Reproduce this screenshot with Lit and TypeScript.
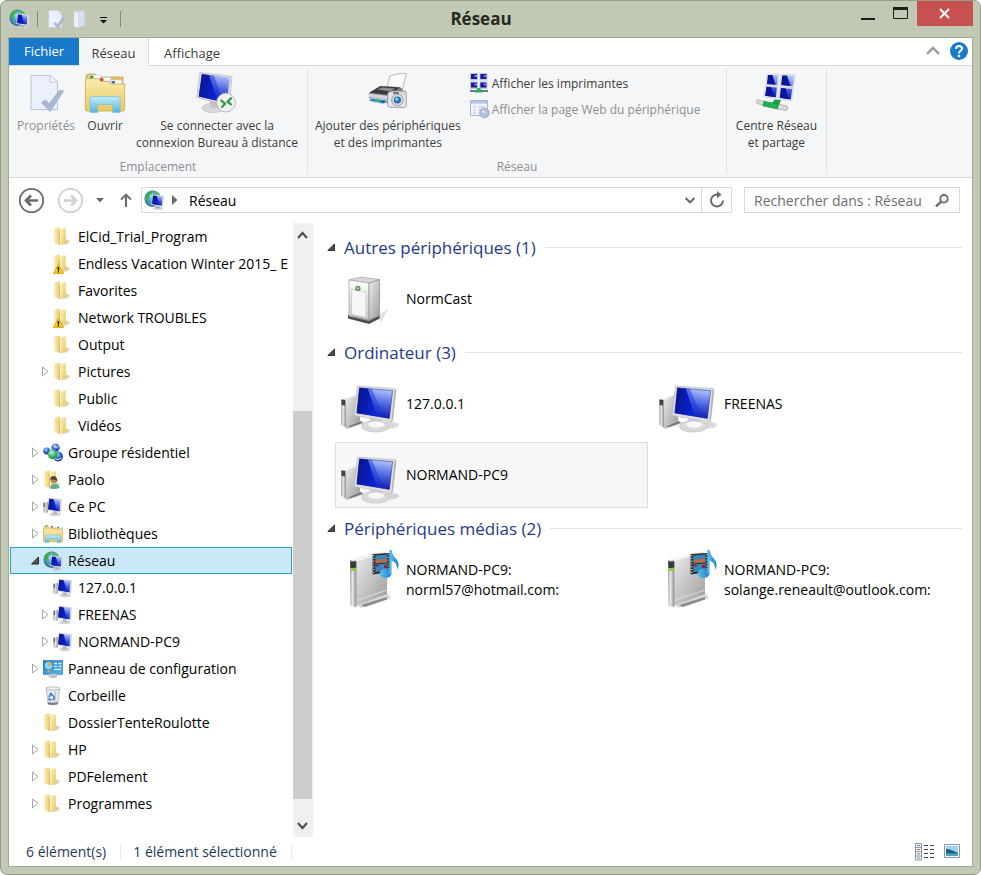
import { LitElement, html, css, svg, nothing } from "lit";
import { customElement, state } from "lit/decorators.js";
import { classMap } from "lit/directives/class-map.js";
import { styleMap } from "lit/directives/style-map.js";

type Expand = "none" | "closed" | "open";

interface TreeRow {
  label: string;
  icon: string;
  level: number;
  expand: Expand;
}

interface Device {
  lines: string[];
  icon: string;
  selected?: boolean;
}

interface Group {
  title: string;
  devices: Device[];
}

const row = (label: string, icon: string, level: number, expand: Expand = "none"): TreeRow => ({
  label,
  icon,
  level,
  expand,
});

const TREE: TreeRow[] = [
  row("ElCid_Trial_Program", "folder", 2),
  row("Endless Vacation Winter 2015_ E", "folder-warn", 2),
  row("Favorites", "folder", 2),
  row("Network TROUBLES", "folder-warn", 2),
  row("Output", "folder", 2),
  row("Pictures", "folder", 2, "closed"),
  row("Public", "folder", 2),
  row("Vidéos", "folder", 2),
  row("Groupe résidentiel", "homegroup", 1, "closed"),
  row("Paolo", "user", 1, "closed"),
  row("Ce PC", "pc", 1, "closed"),
  row("Bibliothèques", "library", 1, "closed"),
  row("Réseau", "network", 1, "open"),
  row("127.0.0.1", "pc", 2),
  row("FREENAS", "pc", 2, "closed"),
  row("NORMAND-PC9", "pc", 2, "closed"),
  row("Panneau de configuration", "panel", 1, "closed"),
  row("Corbeille", "bin", 1),
  row("DossierTenteRoulotte", "folder", 1),
  row("HP", "folder", 1, "closed"),
  row("PDFelement", "folder", 1, "closed"),
  row("Programmes", "folder", 1, "closed"),
];

const GROUPS: Group[] = [
  { title: "Autres périphériques (1)", devices: [{ lines: ["NormCast"], icon: "device-lg" }] },
  {
    title: "Ordinateur (3)",
    devices: [
      { lines: ["127.0.0.1"], icon: "pc-lg" },
      { lines: ["FREENAS"], icon: "pc-lg" },
      { lines: ["NORMAND-PC9"], icon: "pc-lg", selected: true },
    ],
  },
  {
    title: "Périphériques médias (2)",
    devices: [
      { lines: ["NORMAND-PC9:", "norml57@hotmail.com:"], icon: "media-lg" },
      { lines: ["NORMAND-PC9:", "solange.reneault@outlook.com:"], icon: "media-lg" },
    ],
  },
];

const SCROLL = { before: 164, thumb: 387, after: 15 };

const folderBody = svg`
  <path d="M13 12.5 L17.6 14 L14 17.6 L9 18Z" fill="#9a9a9a" opacity=".4"/>
  <path d="M1.4 1.4 L7 .6 V18 L1.4 16.2Z" fill="url(#g-fold-l)"/>
  <path d="M6 2.4 L12 1.2 Q13 1.2 13 2.2 V12.6 L14.6 13.2 V15.6 L7 18.6 L6 17.8Z" fill="url(#g-fold-r)"/>
  <path d="M6.4 4 V17.8" stroke="#cfae55" stroke-width=".8"/>
  <path d="M7.8 4 V17.6" stroke="#fffbe0" stroke-width=".9"/>`;

const sprite = html`
  <svg class="sprite" aria-hidden="true">
    <defs>
      <linearGradient id="g-fold-l" x1="0" x2="1" y1="0" y2="0">
        <stop offset="0" stop-color="#f9eaa6" /><stop offset="1" stop-color="#ead07a" />
      </linearGradient>
      <linearGradient id="g-fold-r" x1="0" x2="1" y1="0" y2="1">
        <stop offset="0" stop-color="#fbf0b8" /><stop offset="1" stop-color="#e6c55e" />
      </linearGradient>
      <linearGradient id="g-screen" x1="0.7" x2="0.5" y1="0" y2="1">
        <stop offset="0" stop-color="#b9c9fb" /><stop offset="0.5" stop-color="#4c66e2" /><stop offset="1" stop-color="#0712a6" />
      </linearGradient>
      <linearGradient id="g-glare" x1="0" x2="1" y1="0" y2="0.3">
        <stop offset="0" stop-color="#0a1484" /><stop offset="1" stop-color="#0a24d6" />
      </linearGradient>
      <linearGradient id="g-metal" x1="0" x2="1" y1="0" y2="0">
        <stop offset="0" stop-color="#8b8b8b" /><stop offset="0.35" stop-color="#eeeeee" /><stop offset="1" stop-color="#8d8d8d" />
      </linearGradient>
      <linearGradient id="g-case" x1="0" x2="1" y1="0" y2="1">
        <stop offset="0" stop-color="#ececec" /><stop offset="1" stop-color="#9c9c9c" />
      </linearGradient>
      <linearGradient id="g-pane" x1="0" x2="0" y1="0" y2="1">
        <stop offset="0" stop-color="#ffffff" /><stop offset="1" stop-color="#c9c9cb" />
      </linearGradient>
      <radialGradient id="g-globe" cx="0.4" cy="0.35" r="0.7">
        <stop offset="0" stop-color="#a8dcf4" /><stop offset="0.5" stop-color="#3f90cf" /><stop offset="1" stop-color="#114a8c" />
      </radialGradient>
      <radialGradient id="g-ball" cx="0.4" cy="0.3" r="0.7">
        <stop offset="0" stop-color="#b7d4fb" /><stop offset="0.5" stop-color="#3b6fd0" /><stop offset="1" stop-color="#12388f" />
      </radialGradient>
      <radialGradient id="g-green" cx="0.4" cy="0.3" r="0.7">
        <stop offset="0" stop-color="#c9f5d6" /><stop offset="0.6" stop-color="#3db868" /><stop offset="1" stop-color="#1d8a48" />
      </radialGradient>
      <linearGradient id="g-lib" x1="0" x2="0" y1="0" y2="1">
        <stop offset="0" stop-color="#f8ecae" /><stop offset="1" stop-color="#e8c95f" />
      </linearGradient>
      <linearGradient id="g-stand" x1="0" x2="0" y1="0" y2="1">
        <stop offset="0" stop-color="#c5ecf8" /><stop offset="1" stop-color="#58b4dc" />
      </linearGradient>
      <linearGradient id="g-note" x1="0" x2="1" y1="0" y2="0">
        <stop offset="0" stop-color="#5cc0f0" /><stop offset="1" stop-color="#1e82cc" />
      </linearGradient>
      <linearGradient id="g-panel" x1="0" x2="1" y1="0" y2="1">
        <stop offset="0" stop-color="#1f84c6" /><stop offset="1" stop-color="#5eb7e8" />
      </linearGradient>
    </defs>

    <symbol id="folder" viewBox="0 0 20 20">${folderBody}</symbol>
    <symbol id="folder-warn" viewBox="0 0 20 20">
      ${folderBody}
      <path d="M5.4 10.5 L10.6 19.4 H.2Z" fill="#ffcb1f" stroke="#d99a00" stroke-width=".8" stroke-linejoin="round" />
      <path d="M5.4 13 V16.4 M5.4 17.3 V18.6" stroke="#111" stroke-width="1.5" />
    </symbol>
    <symbol id="user" viewBox="0 0 20 20">
      ${folderBody}
      <path d="M7 18.4 Q7.6 14 11.6 14 Q16 14 16.8 17.8 Q12 20 7 18.4Z" fill="#5fae94" />
      <circle cx="10.8" cy="10" r="3.2" fill="#b98a5e" />
      <path d="M7.2 9.8 Q7.2 6 11 6 Q14.6 6.4 14.2 12 Q12.8 8.4 7.2 9.8Z" fill="#5c4830" />
    </symbol>
    <symbol id="homegroup" viewBox="0 0 20 20">
      <circle cx="12.5" cy="4.6" r="4.2" fill="url(#g-ball)" />
      <circle cx="3.6" cy="8" r="3.4" fill="url(#g-ball)" />
      <circle cx="15" cy="13.4" r="5" fill="url(#g-ball)" />
      <circle cx="9.6" cy="11.4" r="4.8" fill="url(#g-green)" />
      <path d="M11 3.6 Q13.6 5.4 16 3.4 M11.6 15.6 Q15 18 18.6 15" fill="none" stroke="#cfe2ff" stroke-width="1" />
    </symbol>
    <symbol id="pc" viewBox="0 0 20 20">
      <path d="M.6 5.6 L5 4.8 V15.2 L2.6 16.2 L.6 15Z" fill="url(#g-metal)" />
      <path d="M.6 6 L2 5.8 V10 L.6 10Z" fill="#666" />
      <ellipse cx="12" cy="17.4" rx="5.8" ry="1.9" fill="#d4d4d8" />
      <path d="M9.6 13.6 L14 14 V17.6 H9.6Z" fill="#b8b8bc" />
      <path d="M5.6 .8 L19 2.2 L18.2 15.8 L4.2 13Z" fill="#d3d6de" />
      <path d="M6.3 1.8 L17.2 2.8 L16.6 14.2 L5.2 12.2Z" fill="url(#g-screen)" />
      <path d="M6.3 1.8 L10.6 2.2 L14 13.7 L5.2 12.2Z" fill="url(#g-glare)" />
    </symbol>
    <symbol id="network" viewBox="0 0 20 20">
      <circle cx="8.6" cy="8.6" r="8.2" fill="url(#g-globe)" />
      <path d="M1.6 4.8 Q5 .6 9 .6 Q8 3.6 5.4 5.4 Q6 8 3.6 10.6 Q.6 9 1.6 4.8Z" fill="#3fae49" />
      <path d="M11 1 Q15.4 2.4 16 6 L12 6 Q10 3.6 11 1Z" fill="#58bb55" />
      <path d="M3.4 11.6 Q6 11 7 14 L7 15.6 Q4 14.6 3.4 11.6Z" fill="#4bb45a" />
      <ellipse cx="14" cy="18.2" rx="5" ry="1.5" fill="#cfcfd4" />
      <path d="M12 15.6 H15.6 V18.2 H12Z" fill="#a9a9ad" />
      <path d="M8.2 4.4 L20 5.8 L19.2 17.2 L7.2 15Z" fill="#d8dae2" />
      <path d="M9 5.4 L18.4 6.6 L17.8 15.6 L8.2 14Z" fill="url(#g-screen)" />
      <path d="M9 5.4 L12.8 5.9 L15.6 15.2 L8.2 14Z" fill="url(#g-glare)" />
    </symbol>
    <symbol id="library" viewBox="0 0 20 20">
      <path d="M.6 1.4 H6 L7 2.4 H12 L13 3.4 H19.4 V17.5 H.6Z" fill="#e7cd75" />
      <path d="M2 1 H7 V3.6 H2Z M7 1.8 H12 V4 H7Z M13 2.6 H18 V5 H13Z" fill="#f7f5ea" />
      <path d="M2.6 1 H4.4 V3 H2.6Z" fill="#5aa65a" /><path d="M8 2 H10 V3.8 H8Z" fill="#cf5b5b" /><path d="M14 2.8 H16 V4.6 H14Z" fill="#5a86c8" />
      <path d="M.6 4 H8 L9 5 H19.4 V17.6 H.6Z" fill="url(#g-lib)" stroke="#c9a94a" stroke-width=".6" />
      <path d="M2.4 18.6 V12.6 Q2.4 11 4 11 H16 Q17.6 11 17.6 12.6 V18.6 H14.2 V15 H5.8 V18.6Z" fill="url(#g-stand)" stroke="#6fb9da" stroke-width=".6" />
    </symbol>
    <symbol id="panel" viewBox="0 0 20 20">
      <path d="M0 1.4 H20 V15.4 H0Z" fill="url(#g-panel)" stroke="#2475ad" stroke-width=".6" />
      <ellipse cx="10" cy="16.8" rx="4.6" ry="2.4" fill="#c2c6ca" />
      <circle cx="5.6" cy="6.4" r="3.2" fill="#8fd0f0" stroke="#e2f4fd" stroke-width=".6" />
      <path d="M5.6 6.4 V3.2 A3.2 3.2 0 0 1 8.8 6.4Z" fill="#f39a2b" />
      <path d="M11 4.5 H14 M15.4 4.5 H18.4 M11 7.4 H14 M15.4 7.4 H18.4 M11 10.4 H18" stroke="#d8f0fc" stroke-width="1.3" />
      <path d="M4.6 12 H7" stroke="#f6a23c" stroke-width="1.6" />
    </symbol>
    <symbol id="bin" viewBox="0 0 20 20">
      <path d="M3 2.2 H16.8 L14.8 18 Q9.8 19.8 5 18Z" fill="#e2e8ee" stroke="#a9b4be" stroke-width=".7" />
      <path d="M4.8 16 Q9.8 17.6 15 16 L14.7 18.2 Q9.8 19.8 5 18.2Z" fill="#77818b" />
      <ellipse cx="9.9" cy="2.4" rx="6.9" ry="1.5" fill="#f4f7fa" stroke="#9ca9b4" stroke-width=".7" />
      <path d="M6 11 L7.8 7.6 L9.8 9.6 M10.4 9.4 L11.6 12.4 L9.6 13.8 M8.4 13.8 H6.4 L5.8 12" fill="none" stroke="#3b6fd4" stroke-width="1.5" />
      <path d="M12.6 5 L12 15.4" stroke="#b8c2cc" stroke-width="1.2" />
    </symbol>

    <symbol id="pc-lg" viewBox="0 0 60 60">
      <ellipse cx="48" cy="51" rx="10" ry="3.4" fill="#888" opacity=".3" />
      <path d="M2 52 L18 46 L24 49 L6 55Z" fill="#777" opacity=".45" />
      <path d="M5 25 L19 20 V47 L5 52.6Z" fill="url(#g-case)" />
      <path d="M.4 26.4 Q.4 24.8 2 25 L5 25.6 V52.8 L2 52 Q.4 51.4 .4 50Z" fill="url(#g-metal)" />
      <path d="M.4 26.4 Q.4 24.8 2 25 L4 25.4 V31.6 L.6 31Z" fill="#444" />
      <path d="M.4 25.4 L15 20 L19 20 L5 25.8Z" fill="#f2f2f2" />
      <path d="M7 52.4 L20 47 L21 49 L10 53Z" fill="#777" />
      <path d="M29 43 L41 46 L42 53 H28Z" fill="#d0d0d0" />
      <ellipse cx="34.5" cy="52.4" rx="14" ry="5.6" fill="#dadadc" stroke="#c2c2c4" stroke-width=".8" />
      <ellipse cx="35" cy="50.6" rx="8" ry="3.2" fill="#f8f8f8" />
      <path d="M16.4 12.6 Q16.6 11.8 17.4 12 L54 14.6 Q55.2 14.8 55 16 L51.6 46.6 Q51.4 47.8 50 47.6 L14 41.6 Q13.4 41.4 13.4 40.6Z" fill="#dfe1e4" stroke="#babcc0" stroke-width=".7" />
      <path d="M53.6 15.4 L55 16 L51.6 46.8 L50.4 47.2Z" fill="#aeb0b4" />
      <path d="M18.4 13.8 L51.6 16.6 L48.4 44.4 L15.8 39Z" fill="url(#g-screen)" stroke="#1a2378" stroke-width=".5" />
      <path d="M18.4 13.8 L27 14.5 L36 42.3 L15.8 39Z" fill="url(#g-glare)" />
      <path d="M27 14.5 L31 14.9 L43 43.5 L36 42.3Z" fill="#1430dc" opacity=".45" />
    </symbol>

    <symbol id="device-lg" viewBox="0 0 60 60">
      <path d="M36 48 L48 39 L40 53Z" fill="#888" opacity=".25" />
      <path d="M7 46 L28 51 L38.6 46 L38.6 49.6 L28 55 L7 49.6Z" fill="#4d4d50" />
      <path d="M8 11 L20 8 L38.6 10.6 L28 14Z" fill="#d9d9db" stroke="#a5a5a7" stroke-width=".7" />
      <path d="M8 11 L28 14 V50.6 L8 46.4Z" fill="url(#g-pane)" stroke="#a6a6a8" stroke-width=".8" />
      <path d="M28 14 L38.6 10.6 V45.6 L28 50.6Z" fill="url(#g-case)" stroke="#939395" stroke-width=".8" />
      <path d="M10.6 20.4 L25 23 V48.4 L10.6 45.4Z" fill="#f7f7f8" stroke="#c2c2c4" stroke-width=".7" />
      <circle cx="17" cy="19.4" r="2.6" fill="#58934c" /><circle cx="17" cy="19.4" r="1.1" fill="#cfe6c9" />
      <path d="M8 47 L28 51.6 L38.6 46.4" fill="none" stroke="#a9a9ab" stroke-width=".8" />
    </symbol>

    <symbol id="media-lg" viewBox="0 0 60 60">
      <path d="M14 54 L46 43 L50 48 L20 58Z" fill="#777" opacity=".3" />
      <path d="M20 55 L46 47 V49.6 L24 57Z" fill="#8b8b8d" />
      <path d="M15 11.4 L41 2.6 Q46 1.4 46 6 V44 L15 55.6Z" fill="url(#g-case)" />
      <path d="M15 50.6 L46 40 " stroke="#e4e4e4" stroke-width=".8" />
      <path d="M9 10 L37 1.4 Q42 .8 43 2.6 L15 11.8Z" fill="#f3f3f3" />
      <path d="M9 11.4 Q9 9.4 11 9.8 L15.4 10.8 V57 L11 56.6 Q9.6 56.2 9.6 54.6Z" fill="url(#g-metal)" />
      <path d="M9.2 11.2 L15.2 11.6 V18 H9.4Z" fill="#3a3a3c" /><path d="M10 18.4 L15 17.6 V20.4 L10 21Z" fill="#7bd321" />
      <path d="M31.6 4 L49 3 V22 L31.6 24.4Z" fill="#2b2b2f" />
      <path d="M34.4 5.4 L46.6 4.6 V12.4 L34.4 13.4Z" fill="#3b86b8" /><path d="M34.4 14.6 L46.6 13.6 V20.6 L34.4 22.2Z" fill="#3b86b8" />
      <path d="M35 12.8 V10 L38 9 L39.6 11.4 L44 7.4 L46.4 12.2Z" fill="#d5622d" />
      <path d="M35 14.8 H37.6 V16.6 H35Z M43 15 H46 V18 H43Z" fill="#8e2525" />
      <path d="M32.8 5 V24 M48 4 V22" stroke="#e6e6e6" stroke-width="1.1" stroke-dasharray="1.2 1.6" />
      <ellipse cx="44.6" cy="23.4" rx="5.8" ry="4.6" fill="url(#g-note)" />
      <path d="M48.4 24 V0 H50.6 Q51.2 5 55 8.6 Q59.8 14.4 56 20 Q56.6 12.4 50.6 10.8 V23.6Z" fill="url(#g-note)" />
    </symbol>

    <symbol id="props" viewBox="0 0 40 40">
      <path d="M5 2.5 H24 L31.5 9 V36.5 H5Z" fill="#ebf0fa" stroke="#b9c5dd" />
      <path d="M24 2.5 V9 H31.5Z" fill="#fbfcff" stroke="#b9c5dd" />
      <path d="M15.4 29.6 L19.6 27 L23 31 L33.6 17 L37.6 18.2 L24 38.6Z" fill="#aab8d2" stroke="#9fadc9" stroke-width=".8" />
    </symbol>
    <symbol id="open" viewBox="0 0 44 44">
      <path d="M3 5 Q3 3 5 3 H12 L14 6 H40 V16 H3Z" fill="#e2c265" stroke="#c5a242" stroke-width=".7" />
      <path d="M6 4 H18 V9 H6Z M16 6.4 H28 V11 H16Z M26 9 H39 V14 H26Z" fill="#fff" stroke="#c9c4ae" stroke-width=".6" />
      <path d="M7 4.6 H10.4 V8 H7Z" fill="#3f9e4a" /><path d="M17 7.2 H20.4 V10 H17Z" fill="#cf3a3a" /><path d="M28.6 10 H32 V12.6 H28.6Z" fill="#3d78c2" />
      <path d="M2.4 9 Q2.4 7.6 4 7.6 H15 L18 10.4 H25 L28 13 H41.6 V38 Q41.6 40 39.6 40 H4 Q2.4 40 2.4 38Z" fill="url(#g-lib)" stroke="#cda946" stroke-width=".8" />
      <path d="M7 41.4 V28.4 Q7 25.6 9.8 25.6 H34.4 Q37.2 25.6 37.2 28.4 V41.4 H29.8 V33.6 H14.6 V41.4Z" fill="url(#g-stand)" stroke="#7cc0dd" stroke-width=".8" />
    </symbol>
    <symbol id="rdp" viewBox="0 0 44 44">
      <ellipse cx="18" cy="37" rx="11" ry="4.6" fill="#d9d9dc" stroke="#bdbdc0" stroke-width=".7" />
      <path d="M15 30 H25 V37 H15Z" fill="#c3c3c6" />
      <path d="M5 1.4 L37 5.4 L34 34.6 L1.8 26.8Z" fill="#d9dbe0" stroke="#b7b9be" stroke-width=".7" />
      <path d="M6.8 3 L34.6 6.8 L31.8 32 L3.8 25.4Z" fill="url(#g-screen)" />
      <path d="M6.8 3 L14.4 4 L22.4 29.8 L3.8 25.4Z" fill="url(#g-glare)" />
      <path d="M14.4 4 L19 4.6 L28 31 L22.4 29.8Z" fill="#1430dc" opacity=".5" />
      <circle cx="31" cy="31.6" r="9.4" fill="#f1f1f1" stroke="#bcbcbc" />
      <path d="M25.6 29 L30 32.6 L26.6 36.6 M36.6 26.6 L32.6 30.6 L36.6 34" fill="none" stroke="#2b9a3d" stroke-width="2.2" />
    </symbol>
    <symbol id="printer" viewBox="0 0 44 44">
      <path d="M24 5 Q30 2.6 40.6 2.4 Q38.4 9 36.6 18 L21 16Z" fill="#fbfbfb" stroke="#a8a8a8" stroke-width=".8" />
      <path d="M3 22 L14 15 L34 16 L37 19 V28 L24 33 L3 27Z" fill="#77787c" />
      <path d="M3.4 21.6 L14.4 15.2 L33.6 16.4 L24.6 24Z" fill="#3a3b40" />
      <path d="M11 18.6 L16 16.4 L29 17.4 L25 20.6Z" fill="#8b8c91" />
      <path d="M2.4 22.6 L24 25 V29 L2.4 26Z" fill="#d4d5d8" />
      <path d="M5 27 L22 29.6 L18 33 L3 30Z" fill="#2f84cf" stroke="#e5e5e5" stroke-width=".8" />
      <path d="M7 29.2 L13 29 L14 31.2 L9 30.8Z" fill="#39b45d" /><path d="M15 29.6 L19.6 30.2 L17 31.8Z" fill="#0d4f96" />
      <path d="M22 21.4 L27 20 H39 Q40.4 20.2 40.4 22.4 V34.6 Q40 36.4 38 36.4 H24 Q21.6 36 21.6 33.6Z" fill="#e4e6ea" stroke="#8e9096" stroke-width=".8" />
      <path d="M27 20.8 H33 V23.2 H27Z" fill="#7b7d84" /><path d="M35 21.4 H38.6 V23.4 H35Z" fill="#fff" stroke="#888" stroke-width=".5" />
      <circle cx="31.4" cy="29" r="5.8" fill="#d6dae0" stroke="#8b8e95" stroke-width=".8" /><circle cx="31.4" cy="29" r="3.6" fill="#2a6cab" /><circle cx="30.8" cy="28.2" r="1.6" fill="#7fd4ff" />
    </symbol>
    <symbol id="center" viewBox="0 0 44 44">
      <path d="M13 3 L25 3.2 L24 15 L11.8 14Z M27 3.4 L41.4 3.8 L39.6 16.4 L26 15.2Z M11.4 14.4 L23.8 15.4 L23 27.6 L10 26Z M25.8 15.8 L39.4 17 L37.8 30 L24.6 28Z" fill="#e6e8f2" stroke="#c7cadb" stroke-width=".6" />
      <path d="M14 4 L23.8 4.2 L23 13.8 L13 13Z M28.2 4.4 L40 4.8 L38.6 15.2 L27.2 14Z M12.6 15.8 L22.8 16.6 L22 26.2 L11.2 24.8Z M27 17 L38.2 18 L36.8 28.6 L25.8 26.8Z" fill="url(#g-screen)" />
      <path d="M14 4 L18.4 4.1 L21.6 13.7 L13 13Z M28.2 4.4 L33 4.6 L36.6 15 L27.2 14Z M12.6 15.8 L17 16.1 L20.6 26 L11.2 24.8Z M27 17 L31.6 17.4 L34.6 28.3 L25.8 26.8Z" fill="#0a159e" />
      <path d="M20.6 28.4 L27 29 L25 34 L18 32.6Z" fill="#19a04a" />
      <path d="M3.4 28.6 Q1.6 30.6 3 32.6 L11 34.6 L12 30.6Z" fill="#dadbd8" stroke="#9fa19d" stroke-width=".7" />
      <path d="M24 33 L33 35 Q34.6 37 32.6 39.4 L23 37.8Z" fill="#dadbd8" stroke="#9fa19d" stroke-width=".7" />
      <path d="M10 30.4 L24.6 33 L23.4 38 L9 34.8Z" fill="#1fb152" stroke="#108a3b" stroke-width=".7" />
    </symbol>
    <symbol id="printers" viewBox="0 0 20 20">
      <path d="M0 0 H8 V7.6 H0Z M9.4 0 H17.4 V7.6 H9.4Z M0 8.4 H8 V16 H0Z M9.4 8.4 H17.4 V16 H9.4Z" fill="#c3c7d6" />
      <path d="M1 1 H7 V6 H1Z M10.4 1 H16.4 V6 H10.4Z M1 9.4 H7 V14.4 H1Z M10.4 9.4 H16.4 V14.4 H10.4Z" fill="#1717a0" />
      <path d="M4.4 2 H7 V4 H4.4Z M13.8 2 H16.4 V4 H13.8Z M4.4 10.4 H7 V12.4 H4.4Z M13.8 10.4 H16.4 V12.4 H13.8Z" fill="#7b8de0" />
      <path d="M0 18 H18" stroke="#77797a" stroke-width="2" /><path d="M7.6 15 H10 L13 19.6 H4.6Z" fill="#22b560" />
    </symbol>
    <symbol id="webpage" viewBox="0 0 20 20">
      <path d="M.5 1.5 H17.5 V16.5 H.5Z" fill="#f1f4fb" stroke="#a9b7d3" />
      <path d="M1 2 H17 V4.6 H1Z" fill="#b6c6e2" />
      <path d="M3 8 H6 M8 8 H15 M3 11 H6 M8 11 H12 M3 14 H6" stroke="#b9c5dc" />
      <circle cx="14.4" cy="14" r="4.8" fill="#b4c2dc" stroke="#8fa1c4" stroke-width=".8" /><path d="M12 11.6 Q15 11 15.6 13 Q13 16 12 11.6Z" fill="#dde5f3" />
    </symbol>
    <symbol id="qat-open" viewBox="0 0 20 20">
      <path d="M5 2 L10 1 H15.6 V13 L17.8 14 V17 L10 19 L5 17.6Z" fill="#c3cfe2" />
      <path d="M5 2 L9.4 3.6 V19 L5 17.4Z" fill="#e9eef7" /><path d="M9.4 3.6 L15.6 2 V15 L9.4 19Z" fill="#d6dfed" />
    </symbol>
  </svg>
`;

const icon = (id: string, cls: string) =>
  html`<svg class=${cls} aria-hidden="true"><use href=${`#${id}`}></use></svg>`;

@customElement("app-root")
export class AppRoot extends LitElement {
  @state() private current = "Réseau";

  static styles = css`
    :host {
      display: block;
      font-family: "Open Sans", "Noto Sans", sans-serif;
      font-size: 14px;
      color: #000;
    }
    * {
      box-sizing: border-box;
    }
    button,
    input {
      font: inherit;
      color: inherit;
      background: none;
      border: 0;
      padding: 0;
      margin: 0;
    }
    svg {
      display: block;
      flex: none;
      overflow: visible;
    }
    .sprite {
      position: absolute;
      width: 0;
      height: 0;
    }
    .i20 { width: 20px; height: 20px; }
    .i40 { width: 40px; height: 40px; }
    .i44 { width: 44px; height: 44px; }
    .i60 { width: 60px; height: 60px; }

    .window {
      display: flex;
      flex-direction: column;
      min-height: 100vh;
      background: #c1c9b5;
      border: 1px solid #949c88;
      border-radius: 7px;
      padding: 0 7px 7px;
    }
    .titlebar {
      display: flex;
      height: 36px;
      flex: none;
    }
    .qat {
      display: flex;
      align-items: center;
      gap: 8px;
      padding-left: 1px;
    }
    .qat button { display: flex; }
    .qat-sep {
      width: 1px;
      height: 16px;
      background: #838b79;
    }
    .qat-tools {
      display: flex;
      gap: 3px;
      align-items: center;
    }
    h1 {
      flex: 1;
      margin: 0;
      text-align: center;
      font-size: 17px;
      line-height: 36px;
      font-weight: 700;
      color: #262a20;
    }
    .winbtns {
      display: flex;
      align-items: flex-start;
      padding-left: 10px;
    }
    .winbtns button {
      width: 33px;
      height: 25px;
      display: flex;
      align-items: center;
      justify-content: center;
    }
    .winbtns .close {
      width: 56px;
      background: #c75050;
    }

    .client {
      flex: 1;
      display: flex;
      flex-direction: column;
      background: #fff;
      border: 1px solid #a3ab98;
    }
    .tabs {
      display: flex;
      height: 28px;
      border-bottom: 1px solid #dadbdc;
      font-size: 13px;
      color: #3c3c3c;
    }
    .tabs .file {
      background: #1979ca;
      color: #fff;
      width: 70px;
      padding-bottom: 2px;
    }
    .tabs .active {
      height: 28px;
      width: 70px;
      padding-top: 2px;
      background: #f5f6f7;
      border-right: 1px solid #dadbdc;
    }
    .tabs .plain { padding: 2px 15px 0; }
    .tabs .right {
      margin-left: auto;
      display: flex;
      align-items: center;
      gap: 10px;
      padding: 0 4px 2px 0;
    }

    .ribbon {
      display: flex;
      height: 112px;
      padding: 3px 0;
      background: #f5f6f7;
      border-bottom: 1px solid #dadbdc;
      font-size: 12px;
      line-height: 17px;
      color: #3c3c3c;
    }
    .group {
      display: flex;
      flex-direction: column;
      border-right: 1px solid #e0e1e3;
    }
    .tools {
      flex: 1;
      display: flex;
      align-items: flex-start;
    }
    .group-name {
      text-align: center;
      color: #8e8f91;
      height: 16px;
    }
    .big {
      display: flex;
      flex-direction: column;
      align-items: center;
      gap: 2px;
    }
    .big .slot {
      height: 44px;
      display: flex;
      align-items: center;
    }
    .g1 { width: 299px; }
    .g1 .tools { gap: 8px; padding: 2px 8px 0; }
    .g2 { width: 419px; }
    .g2 .tools { padding: 2px 6px 0 7px; gap: 9px; }
    .g3 { width: 100px; }
    .g3 .tools { justify-content: center; padding-top: 2px; }
    .g1 .big:last-child { flex: 1; }
    .dim { color: #8e8f91; }
    .small-list {
      display: flex;
      flex-direction: column;
      gap: 6px;
      padding-top: 2px;
    }
    .small {
      display: flex;
      align-items: center;
      gap: 2px;
      height: 20px;
      white-space: nowrap;
    }

    .navbar {
      display: flex;
      align-items: center;
      height: 45px;
      padding: 0 12px 1px 9px;
    }
    .navbar button { display: flex; align-items: center; justify-content: center; flex: none; }
    .back { margin-right: 12px; }
    .hist { width: 31px; height: 26px; }
    .up { width: 22px; height: 26px; margin-right: 4px; }
    .address {
      flex: 1;
      display: flex;
      align-items: center;
      height: 26px;
      border: 1px solid #d9d9d9;
    }
    .address .where { gap: 8px; padding-left: 2px; }
    .address .where span { padding-left: 3px; }
    .address .drop { width: 22px; height: 24px; margin-left: auto; }
    .address .refresh { width: 30px; height: 24px; border-left: 1px solid #d9d9d9; }
    .search {
      display: flex;
      align-items: center;
      width: 216px;
      height: 26px;
      margin-left: 12px;
      border: 1px solid #d9d9d9;
      padding: 0 10px 0 9px;
    }
    .search input {
      flex: 1;
      min-width: 0;
      outline: 0;
    }
    .search input::placeholder { color: #6d6d6d; opacity: 1; }

    .body {
      flex: 1;
      display: flex;
    }
    .tree {
      flex: none;
      width: 284px;
      margin: 0;
      padding: 0 0 0 1px;
      list-style: none;
    }
    .tree button {
      display: flex;
      align-items: center;
      width: 282px;
      height: 27px;
      border: 1px solid transparent;
      padding-left: 18px;
      white-space: nowrap;
      overflow: hidden;
      text-align: left;
    }
    .tree .deep { padding-left: 28px; }
    .tree .on {
      background: #cbe8f6;
      border-color: #26a0da;
    }
    .twist {
      width: 14px;
      flex: none;
      display: flex;
      justify-content: center;
    }
    .tree .i20 { margin-right: 5px; }

    .scroll {
      flex: none;
      width: 20px;
      display: flex;
      flex-direction: column;
      padding-right: 1px;
      background: #f0f0f0;
    }
    .scroll button {
      height: 23px;
      display: flex;
      align-items: center;
      justify-content: center;
    }
    .thumb { background: #cdcdcd; }

    .content {
      flex: 1;
      min-width: 0;
      padding: 7px 0 0 14px;
    }
    .content section { margin-bottom: 3px; }
    h2 {
      display: flex;
      align-items: center;
      height: 34px;
      margin: 0 10px 2px 0;
      font-size: 17px;
      font-weight: 400;
      color: #1f3a8c;
      gap: 9px;
      white-space: nowrap;
    }
    h2 i {
      flex: 1;
      height: 1px;
      background: #e2e2e2;
    }
    .grid {
      display: grid;
      grid-template-columns: repeat(auto-fill, 313px);
      gap: 5px;
      padding-left: 8px;
    }
    .cell {
      display: flex;
      align-items: center;
      gap: 5px;
      height: 66px;
      border: 1px solid transparent;
      padding-left: 5px;
      text-align: left;
      line-height: 20px;
      white-space: nowrap;
    }
    .cell.sel {
      background: #f7f7f7;
      border-color: #dedede;
    }
    .cell span { display: block; }

    .status {
      display: flex;
      align-items: center;
      height: 29px;
      padding: 0 11px 0 17px;
      color: #1e395b;
    }
    .status span {
      border-right: 1px solid #e6ebf2;
      padding-right: 14px;
      margin-right: 12px;
      line-height: 16px;
    }
    .views {
      margin-left: auto;
      display: flex;
      gap: 9px;
    }
  `;

  private titlebar() {
    return html`<header class="titlebar">
      <div class="qat">
        ${icon("network", "i20")}
        <div class="qat-sep"></div>
        <div class="qat-tools">
          <button aria-label="Propriétés">${icon("props", "i20")}</button>
          <button aria-label="Ouvrir">${icon("qat-open", "i20")}</button>
          <button aria-label="Personnaliser">
            <svg width="20" height="20"><path d="M8 8.5 H15" stroke="#111" /><path d="M8 11 H15 L11.5 14.5Z" fill="#111" /></svg>
          </button>
        </div>
        <div class="qat-sep"></div>
      </div>
      <h1>Réseau</h1>
      <div class="winbtns">
        <button aria-label="Réduire"><svg width="14" height="14"><path d="M0 12 H14" stroke="#1c1f18" stroke-width="2" /></svg></button>
        <button aria-label="Agrandir"><svg width="15" height="13"><path d="M.5 1 V11.5 H14.5 V1" fill="none" stroke="#1c1f18" /><path d="M0 1.5 H15" stroke="#1c1f18" stroke-width="3" /></svg></button>
        <button class="close" aria-label="Fermer"><svg width="12" height="9"><path d="M1 0 L10 9 M10 0 L1 9" stroke="#fff" stroke-width="2" /></svg></button>
      </div>
    </header>`;
  }

  private tabs() {
    return html`<nav class="tabs">
      <button class="file">Fichier</button>
      <button class="active">Réseau</button>
      <button class="plain">Affichage</button>
      <div class="right">
        <button aria-label="Réduire le ruban"><svg width="14" height="10"><path d="M1 8 L7 2 L13 8" fill="none" stroke="#9a9a9a" stroke-width="2.4" /></svg></button>
        <button aria-label="Aide">
          <svg width="18" height="18"><circle cx="9" cy="9" r="9" fill="#1979ca" /><path d="M6 7 Q6 4 9 4 Q12 4 12 6.6 Q12 8 10.4 9 Q9 9.8 9 11.4" fill="none" stroke="#fff" stroke-width="2" /><circle cx="9" cy="14" r="1.3" fill="#fff" /></svg>
        </button>
      </div>
    </nav>`;
  }

  private ribbon() {
    return html`<div class="ribbon">
      <div class="group g1">
        <div class="tools">
          <button class="big dim" disabled><span class="slot">${icon("props", "i40")}</span><span>Propriétés</span></button>
          <button class="big"><span class="slot">${icon("open", "i44")}</span><span>Ouvrir</span></button>
          <button class="big"><span class="slot">${icon("rdp", "i44")}</span><span>Se connecter avec la<br />connexion Bureau à distance</span></button>
        </div>
        <div class="group-name">Emplacement</div>
      </div>
      <div class="group g2">
        <div class="tools">
          <button class="big"><span class="slot">${icon("printer", "i44")}</span><span>Ajouter des périphériques<br />et des imprimantes</span></button>
          <div class="small-list">
            <button class="small">${icon("printers", "i20")}Afficher les imprimantes</button>
            <button class="small dim" disabled>${icon("webpage", "i20")}Afficher la page Web du périphérique</button>
          </div>
        </div>
        <div class="group-name">Réseau</div>
      </div>
      <div class="group g3">
        <div class="tools">
          <button class="big"><span class="slot">${icon("center", "i44")}</span><span>Centre Réseau<br />et partage</span></button>
        </div>
      </div>
    </div>`;
  }

  private navbar() {
    return html`<div class="navbar">
      <button class="back" aria-label="Précédent">
        <svg width="27" height="27"><circle cx="13.5" cy="13.5" r="11.7" fill="none" stroke="#6a6a6a" stroke-width="1.8" /><path d="M20 13.5 H8.5 M13 8.5 L8 13.5 L13 18.5" fill="none" stroke="#6a6a6a" stroke-width="2.6" /></svg>
      </button>
      <button aria-label="Suivant">
        <svg width="27" height="27"><circle cx="13.5" cy="13.5" r="11.7" fill="none" stroke="#d0d0d0" stroke-width="1.8" /><path d="M7 13.5 H18.5 M14 8.5 L19 13.5 L14 18.5" fill="none" stroke="#d0d0d0" stroke-width="2.6" /></svg>
      </button>
      <button class="hist" aria-label="Emplacements récents"><svg width="8" height="5"><path d="M0 0 H8 L4 4.4Z" fill="#6a6a6a" /></svg></button>
      <button class="up" aria-label="Monter"><svg width="12" height="14"><path d="M6 14 V1.6 M1 6.6 L6 1.6 L11 6.6" fill="none" stroke="#6a6a6a" stroke-width="2" /></svg></button>
      <div class="address">
        <button class="where">${icon("network", "i20")}<svg width="6" height="10"><path d="M0 0 L5.4 5 L0 10Z" fill="#6a6a6a" /></svg><span>Réseau</span></button>
        <button class="drop" aria-label="Historique"><svg width="10" height="7"><path d="M.6 1 L5 5.4 L9.4 1" fill="none" stroke="#666" stroke-width="2" /></svg></button>
        <button class="refresh" aria-label="Actualiser"><svg width="16" height="18"><path d="M9 3.6 A6 6 0 1 0 14 9.4" fill="none" stroke="#6a6a6a" stroke-width="2" /><path d="M8 0 V7.2 L12.6 3.8Z" fill="#6a6a6a" /></svg></button>
      </div>
      <label class="search">
        <input type="text" placeholder="Rechercher dans : Réseau" aria-label="Rechercher dans : Réseau" />
        <svg width="14" height="13"><circle cx="9" cy="4.8" r="3.8" fill="none" stroke="#6a6a6a" stroke-width="1.8" /><path d="M6.2 7.6 L1 12.4" stroke="#6a6a6a" stroke-width="2.4" /></svg>
      </label>
    </div>`;
  }

  private twist(e: Expand) {
    if (e === "closed") return html`<svg width="8" height="11"><path d="M.5 1 L6 5.5 L.5 10Z" fill="#fff" stroke="#a6a6a6" /></svg>`;
    if (e === "open") return html`<svg width="10" height="9"><path d="M7.5 1 V8 H.6Z" fill="#595959" stroke="#262626" /></svg>`;
    return nothing;
  }

  private treeRow(r: TreeRow) {
    return html`<li>
      <button class=${classMap({ deep: r.level === 2, on: r.label === this.current })} @click=${() => (this.current = r.label)}>
        <span class="twist">${this.twist(r.expand)}</span>${icon(r.icon, "i20")}${r.label}
      </button>
    </li>`;
  }

  private groupView(g: Group) {
    return html`<section>
      <h2><svg width="8" height="9"><path d="M7.5 1 V7.5 H.8Z" fill="#4c4c4c" stroke="#333" /></svg>${g.title}<i></i></h2>
      <div class="grid">
        ${g.devices.map(
          (d) => html`<button class=${classMap({ cell: true, sel: !!d.selected })}>
            ${icon(d.icon, "i60")}<span>${d.lines.map((l) => html`<span>${l}</span>`)}</span>
          </button>`
        )}
      </div>
    </section>`;
  }

  render() {
    return html`${sprite}
      <div class="window">
        ${this.titlebar()}
        <div class="client">
          ${this.tabs()} ${this.ribbon()} ${this.navbar()}
          <div class="body">
            <ul class="tree">${TREE.map((r) => this.treeRow(r))}</ul>
            <div class="scroll">
              <button aria-label="Défiler vers le haut"><svg width="11" height="8"><path d="M1 7 L5.5 2 L10 7" fill="none" stroke="#505050" stroke-width="2.2" /></svg></button>
              <div style=${styleMap({ flexGrow: SCROLL.before })}></div>
              <div class="thumb" style=${styleMap({ flexGrow: SCROLL.thumb })}></div>
              <div style=${styleMap({ flexGrow: SCROLL.after })}></div>
              <button aria-label="Défiler vers le bas"><svg width="11" height="8"><path d="M1 1 L5.5 6 L10 1" fill="none" stroke="#505050" stroke-width="2.2" /></svg></button>
            </div>
            <main class="content">${GROUPS.map((g) => this.groupView(g))}</main>
          </div>
          <footer class="status">
            <span>6 élément(s)</span><span>1 élément sélectionné</span>
            <div class="views">
              <svg width="20" height="18"><path d="M.5 .5 H6.5 V17 H.5Z M.5 4.6 H6.5 M.5 8.8 H6.5 M.5 13 H6.5" fill="#fff" stroke="#8b93a3" /><path d="M2 2.6 H5 M2 10.9 H5" stroke="#4a7bb5" /><path d="M2 6.7 H5" stroke="#b5493c" /><path d="M2 15 H5" stroke="#4f9a4f" /><path d="M9 2.5 H13 M15 2.5 H19 M9 6.5 H13 M15 6.5 H19 M9 10.5 H13 M15 10.5 H19 M9 14.5 H13 M15 14.5 H19" stroke="#454055" /></svg>
              <svg width="17" height="16"><path d="M.5 1.5 H15.5 V14.5 H.5Z" fill="#fff" stroke="#7f97b8" /><path d="M2 3 H14 V13 H2Z" fill="#9fd0ee" /><path d="M2 6 L6 6.4 L14 10 V11 H2Z" fill="#1d5f6e" /><path d="M2 10.4 H14 V13 H2Z" fill="#4f9fd0" /></svg>
            </div>
          </footer>
        </div>
      </div>`;
  }
}
